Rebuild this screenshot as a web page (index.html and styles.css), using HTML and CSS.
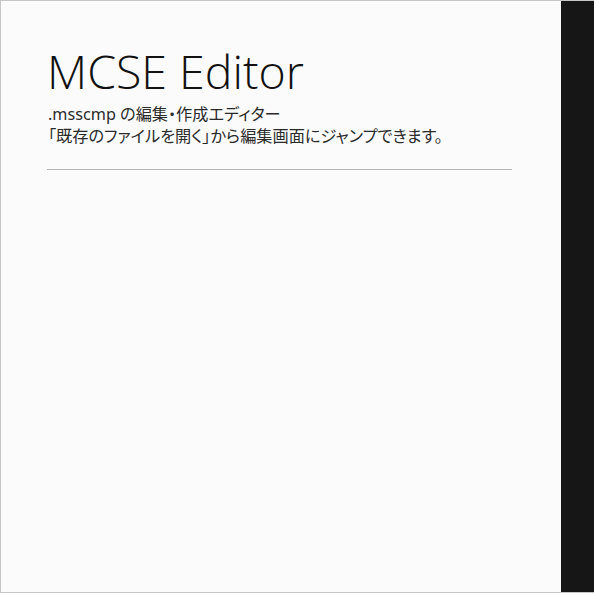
FILE: index.html
```html
<!DOCTYPE html>
<html lang="ja">
<head>
<meta charset="utf-8">
<title>MCSE Editor</title>
<link rel="stylesheet" href="styles.css">
</head>
<body>
<div class="window">
  <main class="main">
    <h1 class="title">MCSE Editor</h1>
    <p class="desc">.msscmp の編集・作成エディター<br>「既存のファイルを開く」から編集画面にジャンプできます。</p>
    <hr class="rule">
  </main>
  <aside class="side"></aside>
</div>
</body>
</html>
```
FILE: styles.css
```css
html, body {
  margin: 0;
  padding: 0;
  height: 100%;
}
body {
  background: #fbfbfb;
}
.window {
  box-sizing: border-box;
  width: 594px;
  height: 593px;
  border: 1px solid #c6c6c6;
  border-right: none;
  display: flex;
}
.main {
  flex: 1;
  background: #fbfbfb;
  padding: 0 49px 0 46px;
}
.side {
  width: 33px;
  background: #161616;
}
.title {
  margin: 42px 0 0 0;
  font-family: "Segoe UI", "Open Sans", "Noto Sans", sans-serif;
  font-weight: 350;
  font-size: 46.5px;
  line-height: 56px;
  color: #111;
}
.desc {
  margin: 4px 0 0 1px;
  font-family: "Segoe UI", "Noto Sans", "Noto Sans CJK JP", sans-serif;
  font-size: 16.2px;
  line-height: 22px;
  color: #2a2a2a;
  font-feature-settings: "palt";
}
.rule {
  margin: 22px 0 0 0;
  border: none;
  border-top: 1px solid #b4b4b4;
  height: 0;
}
```
